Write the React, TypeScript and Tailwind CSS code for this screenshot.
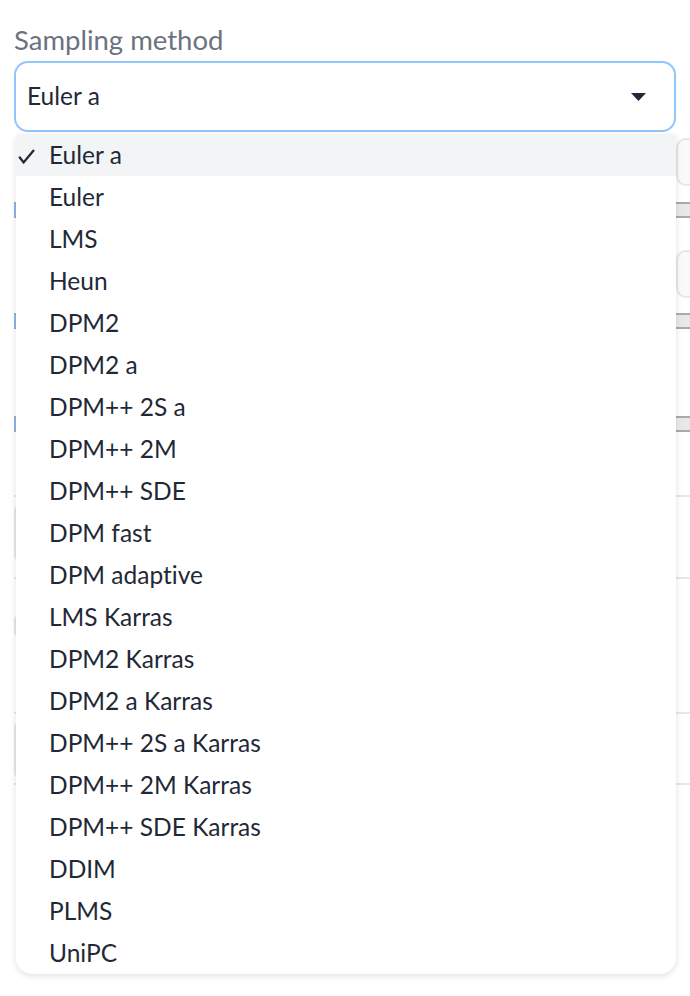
import { useState } from 'react';

const samplers = [
  'Euler a',
  'Euler',
  'LMS',
  'Heun',
  'DPM2',
  'DPM2 a',
  'DPM++ 2S a',
  'DPM++ 2M',
  'DPM++ SDE',
  'DPM fast',
  'DPM adaptive',
  'LMS Karras',
  'DPM2 Karras',
  'DPM2 a Karras',
  'DPM++ 2S a Karras',
  'DPM++ 2M Karras',
  'DPM++ SDE Karras',
  'DDIM',
  'PLMS',
  'UniPC',
];

const Slider = ({ className }: { className: string }) => (
  <div className={`relative h-[16px] border-y-2 border-[#aaaaaa] bg-[#e8e8e8] ${className}`}>
    <div className="h-full w-[120px] bg-[#8fb3f5]" />
  </div>
);

const NumberRow = ({ className }: { className: string }) => (
  <div className={`flex h-[48px] ${className}`}>
    <div className="flex-1" />
    <div className="w-[80px] shrink-0 rounded-[10px] border-2 border-[#e5e7eb] bg-[#fafafa]" />
  </div>
);

const App = () => {
  const [selected] = useState('Euler a');

  return (
    <div className="relative h-[996px] w-[690px] overflow-hidden bg-white font-['Lato',sans-serif] [font-variant-ligatures:none]">
      <div className="px-[14px] pt-[24px]">
        <div className="text-[27.5px] leading-[32px] text-[#6b7280]">Sampling method</div>
        <div className="mt-[5px] flex h-[71px] items-center justify-between rounded-[14px] border-2 border-[#93c5fd] bg-white pl-[11px] pr-[28px]">
          <span className="text-[24.5px] text-[#1f2937]">{selected}</span>
          <svg width="15" height="8" viewBox="0 0 15 8">
            <path d="M0 0 L15 0 L7.5 8 Z" fill="#1f2937" />
          </svg>
        </div>
      </div>

      {/* page content behind the open menu */}
      <div className="ml-[14px] w-[742px]">
        <NumberRow className="mt-[6px]" />
        <Slider className="mt-[16px]" />
        <NumberRow className="mt-[32px]" />
        <Slider className="mt-[15px]" />
        <Slider className="mt-[87px]" />
        <div className="mt-[63px] h-[82px] border-t-2 border-[#e5e7eb] pt-[6px]">
          <div className="h-[60px] w-[200px] rounded-lg border-2 border-[#e5e7eb]" />
        </div>
        <div className="h-[135px] border-t-2 border-[#e5e7eb] pt-[34px]">
          <div className="h-[26px] w-[200px] rounded-lg border-2 border-[#e5e7eb]" />
        </div>
        <div className="h-[71px] border-t-2 border-[#e5e7eb] pt-[6px]">
          <div className="h-[60px] w-[200px] rounded-lg border-2 border-[#e5e7eb]" />
        </div>
        <div className="border-t-2 border-[#e5e7eb]" />
      </div>

      <ul className="absolute left-[16px] top-[134px] w-[660px] overflow-hidden rounded-t-[4px] rounded-b-2xl bg-white shadow-[0_2px_6px_rgba(0,0,0,0.12)]">
        {samplers.map((s) => (
          <li
            key={s}
            className={`flex h-[42px] items-center text-[24.5px] text-[#1f2937] ${s === selected ? 'bg-[#f3f4f6]' : ''}`}
          >
            <span className="flex w-[33px] shrink-0 pl-[2px] pt-[2px]">
              {s === selected && (
                <svg width="17" height="15" viewBox="0 0 17 15">
                  <path d="M1.2 7.8 L5.6 13.4 L16 1" fill="none" stroke="#1f2937" strokeWidth="2.3" />
                </svg>
              )}
            </span>
            <span>{s}</span>
          </li>
        ))}
      </ul>
    </div>
  );
};

export default App;
